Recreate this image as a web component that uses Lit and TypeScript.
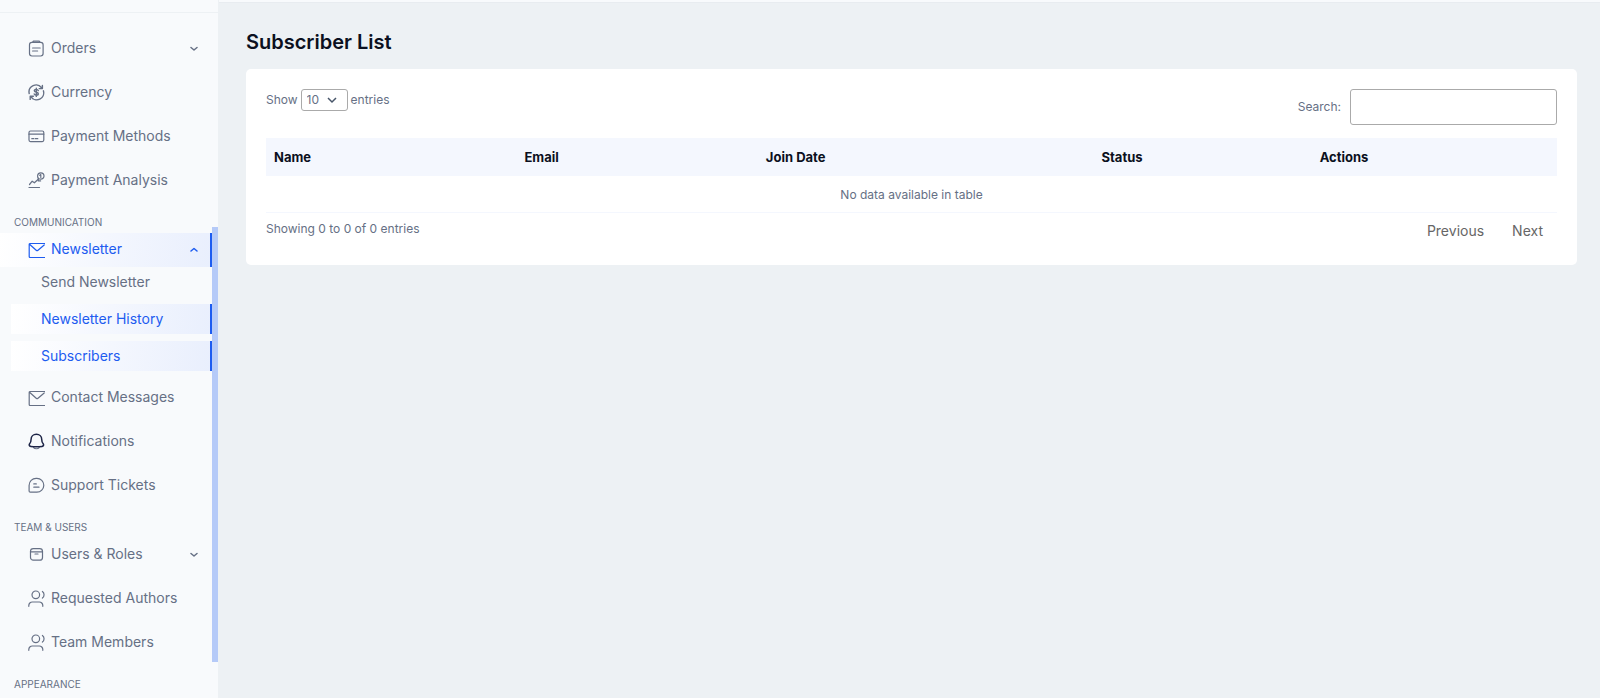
import { LitElement, html, css, svg, nothing, type TemplateResult } from "lit";
import { customElement, property, state } from "lit/decorators.js";

const icons: Record<string, TemplateResult> = {
  orders: svg`<rect x="1.500" y="2.400" width="13.600" height="13.600" rx="2.400"/><path d="M4.600 2.400 5.400 1h5.800l.8 1.400z"/><path d="M4.600 8h7.600M4.600 11h5"/>`,
  currency: svg`<path class="bold" d="M1.200 9.500A7 7 0 0 1 13.600 3.800M15.400 6.800A7 7 0 0 1 3 12.900M14.400 1.400v3.200h-3.200M2.200 15.400v-3.200h3.200"/><path class="bold" d="M10.300 6.600C9.900 5.700 9.200 5.400 8.300 5.400c-1.100 0-2 .5-2 1.400 0 1.900 4 1 4 2.900 0 1-.9 1.500-2 1.500-.9 0-1.700-.4-2.100-1.200M8.300 4.200v8.200"/>`,
  card: svg`<rect x="1" y="3" width="14.800" height="10.600" rx="1.500"/><path d="M1 6.200h14.800M3.800 10.700h2M7.300 10.700h2.500"/>`,
  analysis: svg`<path d="M1 15.500h10.500M1.500 12.500l2.700-3.300 2.200 1.600L10 7.500"/><circle cx="12.800" cy="4" r="3.200"/><path d="M12.800 2.500v3M11.800 3.300l1-.8M10.300 6.200v2.700h2.300"/>`,
  mail: svg`<path d="M16.500 2.500H2.200a1 1 0 0 0-1 1v12a1 1 0 0 0 1 1h14.300M1.800 3.500l6.700 6a1 1 0 0 0 1.200 0l6.500-5.500"/>`,
  bell: svg`<path d="M5.600 14.600c1.200 1.500 4.400 1.500 5.600 0"/><path class="dark" d="M8.400 1.200c-3.200 0-5.300 2.300-5.300 5 0 2.500-.4 3.300-1.500 4.600-.8 1-.4 2.400 1.200 2.600 3.600.5 7.600.5 11.200 0 1.600-.2 2-1.600 1.200-2.600-1.100-1.300-1.500-2.100-1.500-4.600 0-2.700-2.100-5-5.300-5z"/>`,
  chat: svg`<path d="M2.300 15.200c-.8 0-1.200-.5-1.200-1.200V8.400a7 7 0 0 1 7-7h.8a6.900 6.900 0 0 1 0 13.800z"/><path d="M5.800 6.900h2.500M5.800 10.200h5.200"/>`,
  box: svg`<rect x="2.500" y="2.600" width="12" height="11.600" rx="2.800"/><path d="M2.500 5.800h12M7 8h3"/>`,
  users: svg`<circle cx="7.800" cy="4.800" r="3.800"/><path d="M.8 16.300v-.8a3.500 3.500 0 0 1 3.500-3.500h7a3.500 3.500 0 0 1 3.500 3.500v.8M14.400 1.500c2.200 1.500 2.200 5 0 6.600"/>`,
};

interface Entry {
  label: string;
  icon: string;
  active?: boolean;
  children?: { label: string; active?: boolean }[];
}

interface Section {
  title?: string;
  entries: Entry[];
}

const sections: Section[] = [
  {
    entries: [
      { label: "Orders", icon: "orders", children: [] },
      { label: "Currency", icon: "currency" },
      { label: "Payment Methods", icon: "card" },
      { label: "Payment Analysis", icon: "analysis" },
    ],
  },
  {
    title: "COMMUNICATION",
    entries: [
      {
        label: "Newsletter",
        icon: "mail",
        active: true,
        children: [
          { label: "Send Newsletter" },
          { label: "Newsletter History", active: true },
          { label: "Subscribers", active: true },
        ],
      },
      { label: "Contact Messages", icon: "mail" },
      { label: "Notifications", icon: "bell" },
      { label: "Support Tickets", icon: "chat" },
    ],
  },
  {
    title: "TEAM & USERS",
    entries: [
      { label: "Users & Roles", icon: "box", children: [] },
      { label: "Requested Authors", icon: "users" },
      { label: "Team Members", icon: "users" },
    ],
  },
  { title: "APPEARANCE", entries: [] },
];

@customElement("side-nav")
export class SideNav extends LitElement {
  @state() private open = "Newsletter";

  static styles = css`
    :host {
      display: flex;
      box-sizing: border-box;
      height: 100vh;
      overflow: hidden;
      background: #f8fafc;
      border-right: 1px solid #edf1f4;
      color: #667085;
    }
    nav {
      flex: 1;
      min-width: 0;
    }
    .brand {
      height: 12px;
      border-bottom: 1px solid #edf1f4;
      margin: 0 -6px 19px 0;
    }
    h2 {
      margin: 16px 0 3px 14px;
      font-size: 10px;
      line-height: 16px;
      font-weight: 400;
    }
    ul {
      list-style: none;
      margin: 0;
      padding: 0;
      display: grid;
    }
    .entries {
      gap: 10px;
    }
    .row {
      box-sizing: border-box;
      width: 100%;
      height: 34px;
      display: flex;
      align-items: center;
      gap: 6px;
      padding: 0 12px 2px 28px;
      border: 0;
      border-right: 2px solid transparent;
      background: none;
      color: inherit;
      font: inherit;
      font-size: 14px;
      line-height: 20px;
      text-align: left;
      text-decoration: none;
      cursor: pointer;
    }
    .label {
      flex: 1;
      white-space: nowrap;
    }
    .active {
      color: #1d5cf0;
      border-right-color: #1d5cf0;
      background: linear-gradient(100deg, #ffffff, #e9effd);
    }
    .sub {
      gap: 7px;
      margin-left: 11px;
    }
    .sub .row {
      height: 30px;
      padding: 0 12px 0 30px;
    }
    svg {
      fill: none;
      stroke: currentColor;
      stroke-linecap: round;
      stroke-linejoin: round;
      flex: none;
    }
    .icon {
      width: 17px;
      height: 17px;
      stroke-width: 1.2;
    }
    .bold {
      stroke-width: 1.4;
    }
    .dark {
      stroke: #1e2547;
      stroke-width: 1.5;
    }
    .chevron {
      width: 8px;
      height: 8px;
      stroke-width: 1.5;
    }
    .track {
      width: 6px;
      display: grid;
      grid-template-rows: 227fr 435fr 36fr;
    }
    .thumb {
      grid-row: 2;
      background: #b5caf8;
    }
  `;

  private toggle(label: string) {
    this.open = this.open === label ? "" : label;
  }

  private renderEntry(e: Entry) {
    const icon = html`<svg class="icon" viewBox="0 0 17 17" aria-hidden="true">${icons[e.icon]}</svg>
      <span class="label">${e.label}</span>`;
    if (!e.children) return html`<li><a class="row" href="#">${icon}</a></li>`;
    const open = this.open === e.label;
    return html`<li>
      <button class="row ${e.active ? "active" : ""}" aria-expanded=${open} @click=${() => this.toggle(e.label)}>
        ${icon}
        <svg class="chevron" viewBox="0 0 8 8" aria-hidden="true"><path d=${open ? "M1 6 4 3.500 7 6" : "M1 3.500 4 6l3-2.500"} /></svg>
      </button>
      ${open && e.children.length
        ? html`<ul class="sub">
            ${e.children.map((c) => html`<li><a class="row ${c.active ? "active" : ""}" href="#"><span class="label">${c.label}</span></a></li>`)}
          </ul>`
        : nothing}
    </li>`;
  }

  render() {
    return html`<nav aria-label="Main">
        <div class="brand"></div>
        ${sections.map(
          (s) => html`${s.title ? html`<h2>${s.title}</h2>` : nothing}
            <ul class="entries">${s.entries.map((e) => this.renderEntry(e))}</ul>`
        )}
      </nav>
      <div class="track"><div class="thumb"></div></div>`;
  }
}

@customElement("data-table")
export class DataTable extends LitElement {
  @property({ attribute: false }) columns: { label: string; width: number }[] = [];

  static styles = css`
    :host {
      display: block;
      padding: 20px;
      background: #ffffff;
      border-radius: 5px;
      color: #667085;
      font-size: 12px;
      line-height: 18px;
    }
    .tools,
    .footer {
      display: flex;
      justify-content: space-between;
      align-items: flex-start;
    }
    .length {
      display: flex;
      align-items: center;
      gap: 3px;
    }
    .select {
      display: grid;
      align-items: center;
    }
    select,
    .select svg {
      grid-area: 1 / 1;
    }
    select {
      appearance: none;
      box-sizing: border-box;
      width: 47px;
      height: 22px;
      padding: 0 5px;
      border: 1px solid #aaaaaa;
      border-radius: 3px;
      background: #ffffff;
      color: inherit;
      font: inherit;
    }
    .select svg {
      justify-self: end;
      margin-right: 11px;
      width: 10px;
      height: 10px;
      fill: none;
      stroke: #475569;
      stroke-width: 1.5;
      pointer-events: none;
    }
    .search {
      display: flex;
      align-items: center;
      gap: 9px;
    }
    input {
      box-sizing: border-box;
      width: 207px;
      height: 36px;
      padding: 5px;
      border: 1px solid #aaaaaa;
      border-radius: 3px;
      font: inherit;
    }
    table {
      width: 100%;
      margin-top: 13px;
      border-collapse: collapse;
      table-layout: fixed;
    }
    th {
      box-sizing: border-box;
      height: 38px;
      padding: 0 8px;
      background: #f4f7fe;
      color: #0b1020;
      font-size: 13px;
      font-weight: 700;
      text-align: left;
    }
    td {
      height: 35px;
      padding: 1px 0 0;
      border-bottom: 1px solid #f4f7fe;
      text-align: center;
    }
    .info {
      padding-top: 7px;
    }
    .pages {
      display: flex;
      padding-top: 4px;
    }
    .pages button {
      padding: 4px 14px;
      border: 0;
      background: none;
      color: #666666;
      font: inherit;
      font-size: 14px;
      line-height: 20px;
    }
  `;

  render() {
    return html`
      <div class="tools">
        <div class="length">
          <label for="length">Show</label>
          <div class="select">
            <select id="length">
              <option>10</option>
              <option>25</option>
              <option>50</option>
              <option>100</option>
            </select>
            <svg viewBox="0 0 10 10" aria-hidden="true"><path d="M1 3l4 4 4-4" /></svg>
          </div>
          <span>entries</span>
        </div>
        <div class="search">
          <label for="search">Search:</label>
          <input id="search" type="search" />
        </div>
      </div>
      <table>
        <thead>
          <tr>${this.columns.map((c) => html`<th scope="col" style="width:${c.width}%">${c.label}</th>`)}</tr>
        </thead>
        <tbody>
          <tr><td colspan=${this.columns.length}>No data available in table</td></tr>
        </tbody>
      </table>
      <div class="footer">
        <div class="info">Showing 0 to 0 of 0 entries</div>
        <div class="pages"><button>Previous</button><button>Next</button></div>
      </div>
    `;
  }
}

@customElement("app-root")
export class AppRoot extends LitElement {
  static styles = css`
    :host {
      display: grid;
      grid-template-columns: 219px minmax(0, 1fr);
      min-height: 100vh;
      background: #edf1f4;
      font-family: Inter, sans-serif;
    }
    .topbar {
      height: 2px;
      background: #f8fafc;
      border-bottom: 1px solid #e8ecf0;
    }
    main {
      padding: 25px 23px 25px 27px;
    }
    h1 {
      margin: 0 0 13px;
      color: #0b1020;
      font-size: 20px;
      line-height: 28px;
      font-weight: 600;
    }
  `;

  private columns = [
    { label: "Name", width: 19.4 },
    { label: "Email", width: 18.7 },
    { label: "Join Date", width: 26 },
    { label: "Status", width: 16.9 },
    { label: "Actions", width: 19 },
  ];

  render() {
    return html`
      <side-nav></side-nav>
      <div>
        <div class="topbar"></div>
        <main>
          <h1>Subscriber List</h1>
          <data-table .columns=${this.columns}></data-table>
        </main>
      </div>
    `;
  }
}
